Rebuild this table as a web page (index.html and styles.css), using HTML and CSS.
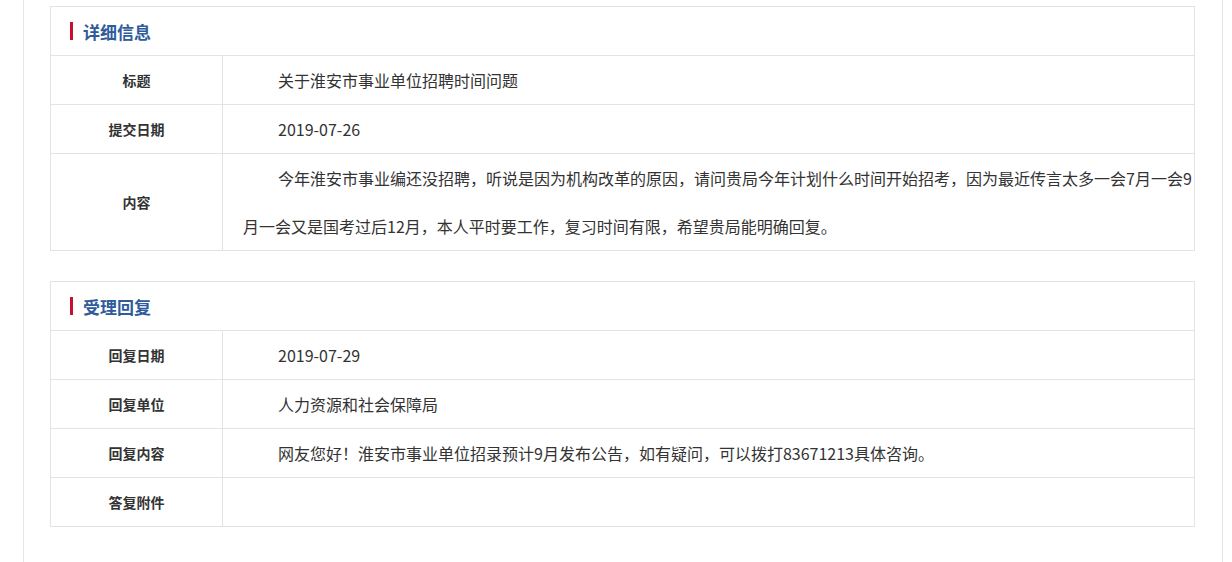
FILE: index.html
```html
<!DOCTYPE html>
<html lang="zh-CN">
<head>
    <meta charset="UTF-8">
    <meta name="viewport" content="width=device-width, initial-scale=1.0">
    <title>详细信息</title>
    <link rel="stylesheet" href="styles.css">
</head>
<body>
    <div class="main">
        <div class="panel">
            <div class="panel-title"><span class="bar"></span>详细信息</div>
            <table class="info">
                <tr>
                    <th>标题</th>
                    <td><p>关于淮安市事业单位招聘时间问题</p></td>
                </tr>
                <tr>
                    <th>提交日期</th>
                    <td><p>2019-07-26</p></td>
                </tr>
                <tr>
                    <th>内容</th>
                    <td><p>今年淮安市事业编还没招聘，听说是因为机构改革的原因，请问贵局今年计划什么时间开始招考，因为最近传言太多一会7月一会9月一会又是国考过后12月，本人平时要工作，复习时间有限，希望贵局能明确回复。</p></td>
                </tr>
            </table>
        </div>

        <div class="panel">
            <div class="panel-title"><span class="bar"></span>受理回复</div>
            <table class="info">
                <tr>
                    <th>回复日期</th>
                    <td><p>2019-07-29</p></td>
                </tr>
                <tr>
                    <th>回复单位</th>
                    <td><p>人力资源和社会保障局</p></td>
                </tr>
                <tr>
                    <th>回复内容</th>
                    <td><p>网友您好！淮安市事业单位招录预计9月发布公告，如有疑问，可以拨打83671213具体咨询。</p></td>
                </tr>
                <tr>
                    <th>答复附件</th>
                    <td><p></p></td>
                </tr>
            </table>
        </div>
    </div>
</body>
</html>
```

FILE: styles.css
```css
body {
    margin: 0;
    background-color: #fff;
    font-family: "Microsoft YaHei", "Noto Sans CJK SC", sans-serif;
    color: #333;
}

.main {
    margin-left: 23px;
    width: 1200px;
    min-height: 562px;
    padding: 6px 27px 0 26px;
    box-sizing: border-box;
    border-left: 1px solid #e6e6e6;
    border-right: 1px solid #e6e6e6;
}

.panel {
    border: 1px solid #e3e3e3;
    margin-bottom: 30px;
}

.panel-title {
    display: flex;
    align-items: center;
    height: 48px;
    padding-left: 19px;
    font-size: 17px;
    font-weight: bold;
    color: #2f5b9a;
}

.bar {
    width: 3px;
    height: 18px;
    background-color: #c8102e;
    margin-right: 10px;
}

.info {
    width: 100%;
    border-collapse: collapse;
}

.info th,
.info td {
    border-top: 1px solid #e3e3e3;
    padding: 0;
}

.info th {
    width: 171px;
    border-right: 1px solid #e3e3e3;
    font-size: 14px;
    font-weight: bold;
    text-align: center;
    vertical-align: middle;
    color: #333;
}

.info td p {
    margin: 0;
    padding-left: 20px;
    font-size: 16px;
    line-height: 48px;
    min-height: 48px;
    text-indent: 35px;
}
```
